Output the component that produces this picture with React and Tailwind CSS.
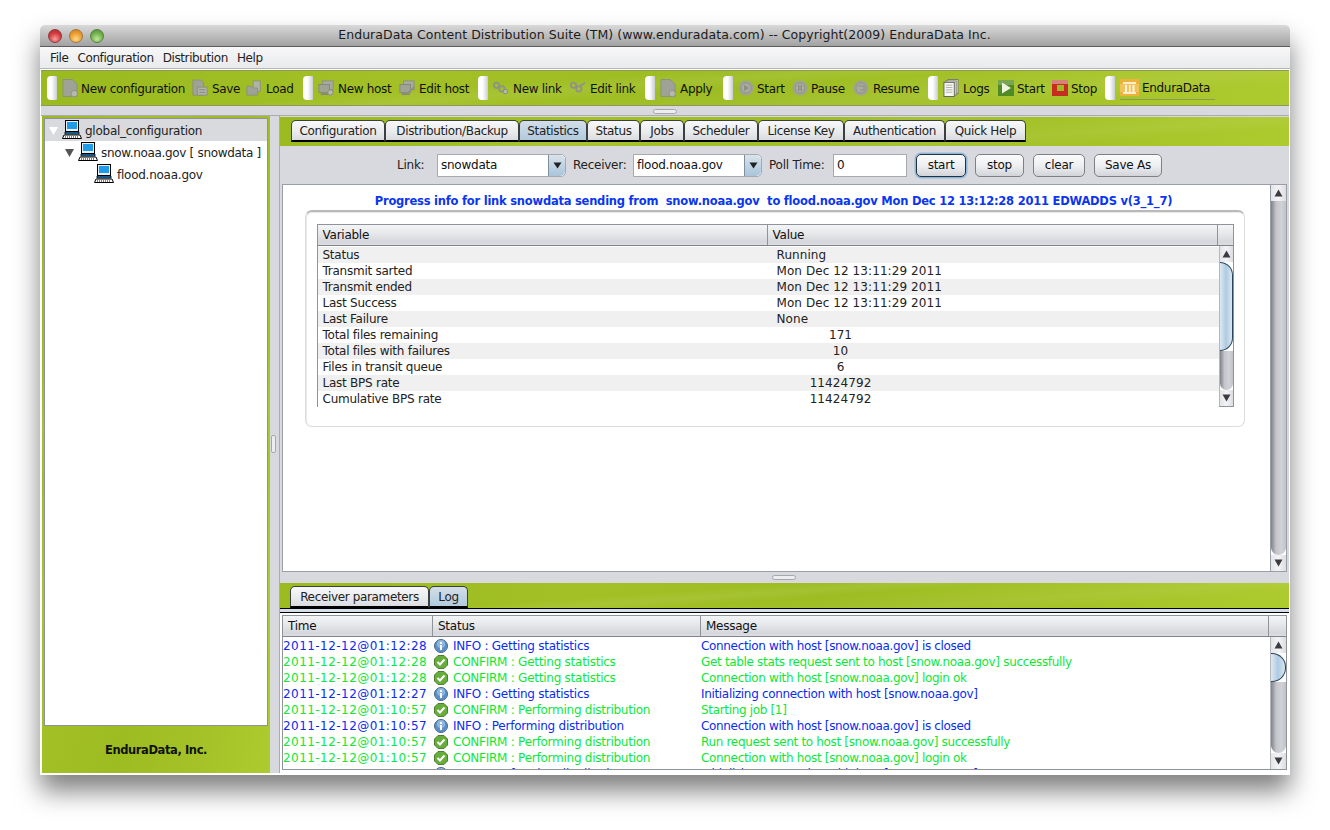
import React from 'react';

const GREEN = 'bg-[linear-gradient(176deg,transparent_38%,rgba(255,255,255,0.07)_46%,transparent_54%,rgba(255,255,255,0.06)_72%,transparent_84%),linear-gradient(100deg,#9aba20_0%,#a3c126_30%,#9dbc22_55%,#a5c328_80%,#adca2e_100%)]';
const HEADER = 'bg-[linear-gradient(180deg,#f4f5f6_0%,#e6e7ea_45%,#d5d7dc_85%,#dcdee2_100%)]';
const DIS = '#9fa396';

function Doc() {
  return (
    <svg width="17" height="20" viewBox="0 0 17 20">
      <path d="M1 1h10l5 5v13H1z" fill={DIS} stroke="#8b8f84" />
      <circle cx="13" cy="16" r="3.5" fill="#b5b8ad" stroke="#8b8f84" />
    </svg>
  );
}
function SaveIcon() {
  return (
    <svg width="18" height="20" viewBox="0 0 18 20">
      <path d="M1 1h9l3 3v14H1z" fill={DIS} stroke="#8b8f84" />
      <rect x="6" y="9" width="11" height="9" fill="#b0b3a8" stroke="#8b8f84" />
      <path d="M8 12h7M8 15h7" stroke="#84887c" />
    </svg>
  );
}
function LoadIcon() {
  return (
    <svg width="18" height="18" viewBox="0 0 18 18">
      <path d="M8 1h8v12H8z" fill="#b0b3a8" stroke="#8b8f84" />
      <path d="M1 7h5l2 2h5v8H1z" fill={DIS} stroke="#8b8f84" />
    </svg>
  );
}
function HostIcon({ edit }) {
  return (
    <svg width="18" height="18" viewBox="0 0 18 18">
      <rect x="5" y="1" width="12" height="10" fill="#a7aa9d" stroke="#8b8f84" />
      <rect x="1" y="5" width="12" height="9" fill={DIS} stroke="#83877b" />
      <path d="M3 16h9" stroke="#83877b" strokeWidth="2" />
      {edit ? <path d="M9 16l8-8" stroke="#8b8f84" strokeWidth="2" /> : <circle cx="14" cy="14" r="3" fill="#b8bbb0" stroke="#83877b" />}
    </svg>
  );
}
function LinkIcon({ edit }) {
  return (
    <svg width="18" height="14" viewBox="0 0 18 14">
      <circle cx="4" cy="4" r="3" fill="none" stroke="#8e9288" strokeWidth="2" />
      <circle cx="10" cy="8" r="3" fill="none" stroke="#8e9288" strokeWidth="2" />
      {edit ? <path d="M11 5l6-4" stroke="#8e9288" strokeWidth="2" /> : <circle cx="14" cy="11" r="2.5" fill="#b8bbb0" stroke="#83877b" />}
    </svg>
  );
}
function Round({ children }) {
  return (
    <svg width="16" height="16" viewBox="0 0 16 16">
      <circle cx="8" cy="8" r="7.5" fill={DIS} />
      <circle cx="8" cy="8" r="5" fill="#a9ac9f" stroke="#91958a" />
      {children}
    </svg>
  );
}
function Logs() {
  return (
    <svg width="17" height="20" viewBox="0 0 17 20">
      <rect x="5" y="1" width="11" height="15" fill="#e6e6e2" stroke="#77796f" />
      <rect x="3" y="2.5" width="11" height="15" fill="#eeeeea" stroke="#77796f" />
      <rect x="1" y="4" width="11" height="15" fill="#f6f6f3" stroke="#5f6158" />
      <path d="M3 7h7M3 9.5h7M3 12h7M3 14.5h7" stroke="#aeb0a8" />
    </svg>
  );
}
function GoIcon() {
  return (
    <svg width="16" height="16" viewBox="0 0 16 16">
      <rect width="16" height="16" fill="#4f8a24" />
      <rect width="16" height="5" fill="#79a650" />
      <path d="M4 2.5l9 5.5-9 5.5z" fill="#eef4df" />
    </svg>
  );
}
function StopIcon() {
  return (
    <svg width="16" height="16" viewBox="0 0 16 16">
      <rect width="16" height="16" fill="#c62c22" />
      <rect width="16" height="4" fill="#d8807a" />
      <rect x="5" y="5" width="7" height="6" fill="#9dbc22" />
    </svg>
  );
}
function Temple() {
  return (
    <svg width="19" height="17" viewBox="0 0 19 17">
      <rect width="19" height="17" fill="#ecb23c" />
      <rect y="5" width="19" height="8" fill="#f2c25c" />
      <path d="M3 3h13v2H3zM3 13h13v2H3z" fill="#fbeecb" />
      <path d="M5 6h2v7H5zM9 6h1.500v7H9zM12.500 6h2v7h-2z" fill="#fff6df" />
    </svg>
  );
}
function Computer() {
  return (
    <svg width="20" height="20" viewBox="0 0 20 20" className="shrink-0">
      <rect x="3.500" y="0.500" width="13" height="11" fill="#e8eef6" stroke="#000" />
      <rect x="5" y="2" width="10" height="7" fill="#1f9be8" />
      <path d="M3 12h14v2H3z" fill="#2b8fd8" stroke="#000" strokeWidth="0.800" />
      <path d="M2 15h16l1.500 3.500H0.500z" fill="#fff" stroke="#000" />
      <path d="M3 17h14" stroke="#000" strokeDasharray="1 1" />
    </svg>
  );
}
function InfoIcon() {
  return (
    <svg width="14" height="14" viewBox="0 0 14 14" className="shrink-0">
      <circle cx="7" cy="7" r="6.500" fill="#5d8fc9" stroke="#44678f" />
      <circle cx="7" cy="5" r="4" fill="#8fb6e0" />
      <rect x="6" y="6" width="2" height="5" fill="#fff" />
      <rect x="6" y="3" width="2" height="2" fill="#fff" />
    </svg>
  );
}
function CheckIcon() {
  return (
    <svg width="14" height="14" viewBox="0 0 14 14" className="shrink-0">
      <path d="M4 .5h6L13.500 4v6L10 13.500H4L.5 10V4z" fill="#67ad3c" stroke="#4f7f33" />
      <path d="M3.500 7l2.500 2.500 4.500-5" fill="none" stroke="#fff" strokeWidth="2" />
    </svg>
  );
}

const TOOLBAR = [
  { grip: true },
  { icon: <Doc />, label: 'New configuration', w: 'w-[130px]', gap: 'gap-[2px]' },
  { icon: <SaveIcon />, label: 'Save', w: 'w-[54px]', gap: 'gap-[3px]' },
  { icon: <LoadIcon />, label: 'Load', w: 'w-[57px]', gap: 'gap-[3px]' },
  { grip: true },
  { icon: <HostIcon />, label: 'New host', w: 'w-[81px]', gap: 'gap-[3px]' },
  { icon: <HostIcon edit />, label: 'Edit host', w: 'w-[79px]', gap: 'gap-[3px]' },
  { grip: true },
  { icon: <LinkIcon />, label: 'New link', w: 'w-[77px]', gap: 'gap-[3px]' },
  { icon: <LinkIcon edit />, label: 'Edit link', w: 'w-[75px]', gap: 'gap-[3px]' },
  { grip: true },
  { icon: <Doc />, label: 'Apply', w: 'w-[63px]', gap: 'gap-[3px]' },
  { grip: true },
  { icon: <Round><path d="M6 5l5 3-5 3z" fill="#8b8f84" /></Round>, label: 'Start', w: 'w-[54px]', gap: 'gap-[2px]' },
  { icon: <Round><path d="M6 5h1.500v6H6zM8.500 5H10v6H8.500z" fill="#8b8f84" /></Round>, label: 'Pause', w: 'w-[61px]', gap: 'gap-[2px]' },
  { icon: <Round><path d="M5 6h6v4H7" fill="none" stroke="#8b8f84" /></Round>, label: 'Resume', w: 'w-[75px]', gap: 'gap-[3px]' },
  { grip: true },
  { icon: <Logs />, label: 'Logs', w: 'w-[55px]', gap: 'gap-[3px]' },
  { icon: <GoIcon />, label: 'Start', w: 'w-[54px]', gap: 'gap-[2px]' },
  { icon: <StopIcon />, label: 'Stop', w: 'w-[53px]', gap: 'gap-[2px]' },
  { grip: true },
  { icon: <Temple />, label: 'EnduraData', w: 'w-[95px] border-b border-[#8b9a55] h-[25px] -mt-[1px]', gap: 'gap-[2px]' },
];

const TABS = [
  ['Configuration', 'w-[94px]'],
  ['Distribution/Backup', 'w-[134px]'],
  ['Statistics', 'w-[68px]'],
  ['Status', 'w-[53px]'],
  ['Jobs', 'w-[44px]'],
  ['Scheduler', 'w-[74px]'],
  ['License Key', 'w-[86px]'],
  ['Authentication', 'w-[101px]'],
  ['Quick Help', 'w-[81px]'],
];

const STATS = [
  ['Status', 'Running'],
  ['Transmit sarted', 'Mon Dec 12 13:11:29 2011'],
  ['Transmit ended', 'Mon Dec 12 13:11:29 2011'],
  ['Last Success', 'Mon Dec 12 13:11:29 2011'],
  ['Last Failure', 'None'],
  ['Total files remaining', '171', true],
  ['Total files with failures', '10', true],
  ['Files in transit queue', '6', true],
  ['Last BPS rate', '11424792', true],
  ['Cumulative BPS rate', '11424792', true],
];

const LOG = [
  ['2011-12-12@01:12:28', 'info', 'INFO : Getting statistics', 'Connection with host [snow.noaa.gov] is closed'],
  ['2011-12-12@01:12:28', 'ok', 'CONFIRM : Getting statistics', 'Get table stats request sent to host [snow.noaa.gov] successfully'],
  ['2011-12-12@01:12:28', 'ok', 'CONFIRM : Getting statistics', 'Connection with host [snow.noaa.gov] login ok'],
  ['2011-12-12@01:12:27', 'info', 'INFO : Getting statistics', 'Initializing connection with host [snow.noaa.gov]'],
  ['2011-12-12@01:10:57', 'ok', 'CONFIRM : Performing distribution', 'Starting job [1]'],
  ['2011-12-12@01:10:57', 'info', 'INFO : Performing distribution', 'Connection with host [snow.noaa.gov] is closed'],
  ['2011-12-12@01:10:57', 'ok', 'CONFIRM : Performing distribution', 'Run request sent to host [snow.noaa.gov] successfully'],
  ['2011-12-12@01:10:57', 'ok', 'CONFIRM : Performing distribution', 'Connection with host [snow.noaa.gov] login ok'],
  ['2011-12-12@01:10:57', 'info', 'INFO : Performing distribution', 'Initializing connection with host [snow.noaa.gov]'],
];

function Grip({ className = '' }) {
  return <div className={`h-[5px] w-[24px] rounded-[3px] border border-[#a4a7ae] bg-[#eceded] ${className}`} />;
}

function ToolGrip() {
  return <div className="w-[10px] h-[24px] mr-[5px] rounded-l-[4px] rounded-r-[1px] bg-[linear-gradient(90deg,#ffffff_0%,#ffffff_45%,#c9ccd2_100%)] shrink-0" />;
}

function Tab({ label, w, active }) {
  return (
    <div className={`${w} h-[22px] flex items-center justify-center pt-[1px] rounded-t-[5px] border-x border-t border-b-2 border-[#3b3f40] border-b-black text-[#222] tracking-[-0.35px] ${active ? 'bg-[linear-gradient(180deg,#d3dee7_0%,#b1cadd_100%)]' : 'bg-[linear-gradient(180deg,#f8f8f9_0%,#e9eaec_60%,#d9dbe0_100%)]'}`}>
      {label}
    </div>
  );
}

function Combo({ value, w }) {
  return (
    <div className={`${w} h-[23px] flex rounded-r-[5px] border border-[#a7a9ae] bg-white`}>
      <div className="flex-1 pl-[3px] leading-[21px] text-[#111]">{value}</div>
      <div className="w-[17px] flex items-center justify-center rounded-r-[5px] border-l border-[#7f8f9f] bg-[linear-gradient(180deg,#d9e4ec_0%,#a9c4d9_100%)]">
        <svg width="9" height="7" viewBox="0 0 9 7"><path d="M.5 .5h8L4.500 6.500z" fill="#222" /></svg>
      </div>
    </div>
  );
}

function Btn({ children, w, focus }) {
  return (
    <div className={`${w} h-[23px] flex items-center justify-center rounded-[5px] border bg-[linear-gradient(180deg,#fbfbfc_0%,#eeeff1_50%,#d2d4d9_100%)] text-[#111] ${focus ? 'border-[#20313f] shadow-[0_0_0_1.500px_#8fb8d8]' : 'border-[#7d8085]'}`}>
      {children}
    </div>
  );
}

function Arrow({ up }) {
  return (
    <div className="h-[16px] flex items-center justify-center bg-[linear-gradient(90deg,#e4e5e8_0%,#f4f4f6_50%,#dcdde1_100%)] shrink-0">
      <svg width="9" height="8" viewBox="0 0 9 8"><path d={up ? 'M4.500 .5L8.500 7.500H.5z' : 'M.5 .5h8L4.500 7.500z'} fill="#3c3c40" /></svg>
    </div>
  );
}

function Track({ grow = 'flex-1' }) {
  return <div className={`${grow} bg-[linear-gradient(90deg,#7f8288_0%,#c4c6cc_35%,#d0d2d7_70%,#c0c2c8_100%)] rounded-b-[8px]`} />;
}

function Thumb({ h }) {
  return <div className={`${h} shrink-0 rounded-r-[14px] border-y border-r border-[#27455e] bg-[linear-gradient(90deg,#dfe9f1_0%,#aecbe2_50%,#dbe7f0_100%)]`} />;
}

function TableHeader({ cells }) {
  return (
    <div className={`flex h-[21px] ${HEADER} border-b border-[#7f848c] text-[#111] shrink-0`}>
      {cells.map(([t, w, pad]) => (
        <div key={t || 'corner'} className={`${w} ${pad} leading-[20px] border-r border-[#8f939a] last:border-r-0`}>{t}</div>
      ))}
    </div>
  );
}

export default function App() {
  return (
    <div className="w-[1330px] h-[830px] overflow-hidden bg-white pt-[25px] pl-[40px] text-[12px] font-['DejaVu_Sans',sans-serif] tracking-[-0.25px]">
      <div className="w-[1250px] h-[750px] flex flex-col overflow-hidden bg-white rounded-t-[5px] shadow-[0_16px_26px_rgba(0,0,0,0.5)]">
        {/* title bar */}
        <div className="h-[22px] flex items-center shrink-0 bg-[linear-gradient(180deg,#d9d9d9_0%,#bdbdbd_50%,#a2a2a2_100%)] border-b border-[#5c5c5c]">
          <div className="flex gap-[7px] pl-[8px]">
            <div className="w-[14px] h-[14px] rounded-full border border-[#8f3a3a] bg-[radial-gradient(circle_at_50%_75%,#f4a0a0_0%,#d8393c_55%,#a82a2e_100%)]" />
            <div className="w-[14px] h-[14px] rounded-full border border-[#a37835] bg-[radial-gradient(circle_at_50%_75%,#fbd98b_0%,#ee9c2f_55%,#c47d20_100%)]" />
            <div className="w-[14px] h-[14px] rounded-full border border-[#55803a] bg-[radial-gradient(circle_at_50%_75%,#c2e59a_0%,#72b34c_55%,#4f8d3a_100%)]" />
          </div>
          <div className="flex-1 text-center text-[12.500px] tracking-[0.05px] text-[#1c1c1c] pr-[65px]">EnduraData Content Distribution Suite (TM) (www.enduradata.com) -- Copyright(2009) EnduraData Inc.</div>
        </div>

        {/* menu */}
        <div className="h-[22px] flex items-center gap-[9px] pl-[10px] shrink-0 bg-[linear-gradient(180deg,#f7f7f8_0%,#e9eaec_100%)] border-b border-[#b4b6ba] text-[#222] tracking-[-0.4px]">
          <span>File</span><span>Configuration</span><span>Distribution</span><span>Help</span>
        </div>

        {/* toolbar */}
        <div className="h-[37px] mx-[1px] mt-[1px] bg-[#d8d9de] shrink-0 flex flex-col">
          <div className={`h-[36px] flex items-center pl-[6px] ${GREEN} border-y border-[#8c9a55]`}>
            {TOOLBAR.map((t, i) => t.grip ? <ToolGrip key={i} /> : (
              <div key={i} className={`${t.w} ${t.gap} flex items-center shrink-0 text-[#111]`}>
                <span className={`${t.label === 'EnduraData' ? 'w-[19px]' : 'w-[16px]'} flex justify-center shrink-0`}>{t.icon}</span>
                <span className="whitespace-nowrap pl-[1px] pt-[2px] tracking-[-0.32px]">{t.label}</span>
              </div>
            ))}
          </div>
        </div>

        <div className="h-[9px] flex items-center justify-center bg-[#d8d9de] border-b border-[#a9abb1] shrink-0 mx-[1px]">
          <Grip />
        </div>

        {/* main */}
        <div className="flex flex-1 min-h-0 mx-[1px] mb-[2px]">
          {/* left pane */}
          <div className={`w-[228px] flex flex-col ml-[1px] pt-[2px] ${GREEN}`}>
            <div className="h-[608px] mx-[2px] border border-[#8f9399] bg-white text-[#222] shrink-0">
              <div className="h-[22px] flex items-center bg-[#d8dade]">
                <svg width="9" height="9" viewBox="0 0 9 9" className="ml-[4px] mr-[4px]"><path d="M0 1h9L4.500 9z" fill="#fff" /></svg>
                <Computer />
                <span className="pl-[3px] pt-[2px]">global_configuration</span>
              </div>
              <div className="h-[22px] flex items-center pl-[20px]">
                <svg width="9" height="9" viewBox="0 0 9 9" className="mr-[4px]"><path d="M0 1h9L4.500 9z" fill="#555" /></svg>
                <Computer />
                <span className="pl-[3px] pt-[2px] whitespace-nowrap tracking-[-0.32px]">snow.noaa.gov [ snowdata ]</span>
              </div>
              <div className="h-[22px] flex items-center pl-[49px]">
                <Computer />
                <span className="pl-[3px] pt-[2px]">flood.noaa.gov</span>
              </div>
            </div>
            <div className="flex-1 flex items-center justify-center font-bold text-[#111] text-[11.500px] tracking-[-0.4px] pt-[3px]">EnduraData, Inc.</div>
          </div>

          {/* vertical splitter */}
          <div className="w-[10px] flex items-center justify-start pl-[1px] pb-[2px] bg-[#d8d9de] border-r border-[#a9abb1] shrink-0">
            <div className="w-[5px] h-[18px] rounded-[2px] border border-[#a4a7ae] bg-[#eceded]" />
          </div>

          {/* right pane */}
          <div className="flex-1 flex flex-col min-w-0 bg-white">
            <div className="flex flex-col bg-[#d8d9de] pt-[1px]">
              <div className={`h-[29px] pl-[11px] pt-[3px] flex ${GREEN}`}>
                {TABS.map(([t, w]) => <Tab key={t} label={t} w={w} active={t === 'Statistics'} />)}
              </div>
              <div className="h-[38px] flex items-center text-[#222]">
                <span className="ml-[117px] w-[40px]">Link:</span>
                <Combo value="snowdata" w="w-[129px]" />
                <span className="ml-[7px] w-[60px]">Receiver:</span>
                <Combo value="flood.noaa.gov" w="w-[129px]" />
                <span className="ml-[7px] w-[64px]">Poll Time:</span>
                <div className="w-[74px] h-[23px] border border-[#a7a9ae] bg-white pl-[3px] leading-[21px] text-[#111]">0</div>
                <div className="ml-[9px]"><Btn w="w-[50px]" focus>start</Btn></div>
                <div className="ml-[9px]"><Btn w="w-[49px]">stop</Btn></div>
                <div className="ml-[9px]"><Btn w="w-[52px]">clear</Btn></div>
                <div className="ml-[9px]"><Btn w="w-[68px]">Save As</Btn></div>
              </div>

              {/* statistics */}
              <div className="h-[388px] mx-[2px] flex border border-[#9a9ea8] bg-white">
                <div className="flex-1 min-w-0 flex flex-col items-center pt-[7px]">
                  <div className="h-[18px] font-bold text-[#0a36f0] whitespace-pre text-[11.500px] tracking-[-0.23px] leading-[18px] mr-[6px]">Progress info for link snowdata sending from  snow.noaa.gov  to flood.noaa.gov Mon Dec 12 13:12:28 2011 EDWADDS v(3_1_7)</div>
                  <div className="w-[940px] h-[217px] mr-[4px] rounded-[7px] border border-[#dcdcdc] border-t-[#b9b9b9] border-t-2 shadow-[inset_1px_1px_1px_#e8e8e8] pt-[12px] pl-[11px]">
                    <div className="w-[917px] h-[183px] flex flex-col border border-[#8f939a]">
                      <TableHeader cells={[['Variable', 'w-[450px]', 'pl-[5px]'], ['Value', 'w-[450px]', 'pl-[5px]'], ['', 'flex-1', '']]} />
                      <div className="flex flex-1 min-h-0">
                        <div className="flex-1 min-w-0 text-[#222] pt-[1px]">
                          {STATS.map(([k, v, num], i) => (
                            <div key={k} className={`h-[16px] flex leading-[16px] ${i % 2 === 0 ? 'bg-[#f0f0f0]' : 'bg-white'}`}>
                              <div className="w-[459px] pl-[5px]">{k}</div>
                              <div className={`tracking-[0.08px] ${num ? 'w-[128px] text-center' : 'whitespace-nowrap'}`}>{v}</div>
                            </div>
                          ))}
                        </div>
                        <div className="w-[14px] flex flex-col border-l border-[#b5b7bc] shrink-0">
                          <Arrow up />
                          <Thumb h="h-[89px]" />
                          <Track />
                          <Arrow />
                        </div>
                      </div>
                    </div>
                  </div>
                </div>
                <div className="w-[16px] flex flex-col border-l border-[#9a9ea8] shrink-0">
                  <Arrow up />
                  <Track />
                  <Arrow />
                </div>
              </div>

              <div className="h-[11px] flex items-center justify-center bg-[#d8d9de] shrink-0 pr-[2px]">
                <Grip className="bg-[#e4e5e7]" />
              </div>

              <div className={`h-[25px] pl-[10px] flex items-end ${GREEN}`}>
                <Tab label="Receiver parameters" w="w-[139px]" />
                <Tab label="Log" w="w-[39px]" active />
              </div>
              <div className="h-[5px] border-y border-black bg-[#d6dde8]" />
            </div>

            {/* log table */}
            <div className="h-[155px] mx-[2px] mt-[2px] flex flex-col border border-[#8f939a] overflow-hidden">
              <TableHeader cells={[['Time', 'w-[150px]', 'pl-[5px]'], ['Status', 'w-[268px]', 'pl-[5px]'], ['Message', 'w-[568px]', 'pl-[5px]'], ['', 'flex-1', '']]} />
              <div className="flex flex-1 min-h-0">
                <div className="flex-1 min-w-0 overflow-hidden pt-[1px]">
                  {LOG.map(([time, kind, status, msg], i) => (
                    <div key={i} className={`h-[16px] flex items-center whitespace-nowrap ${kind === 'info' ? 'text-[#0a2cf0]' : 'text-[#0be83a]'}`}>
                      <div className="w-[150px] tracking-[0.45px]">{time}</div>
                      <div className="w-[268px] flex items-center gap-[5px] pl-[1px]">
                        {kind === 'info' ? <InfoIcon /> : <CheckIcon />}
                        <span>{status}</span>
                      </div>
                      <div className="tracking-[-0.33px]">{msg}</div>
                    </div>
                  ))}
                </div>
                <div className="w-[16px] flex flex-col border-l border-[#b5b7bc] shrink-0">
                  <Arrow up />
                  <Thumb h="h-[29px]" />
                  <Track />
                  <Arrow />
                </div>
              </div>
            </div>
          </div>
        </div>
      </div>
    </div>
  );
}
